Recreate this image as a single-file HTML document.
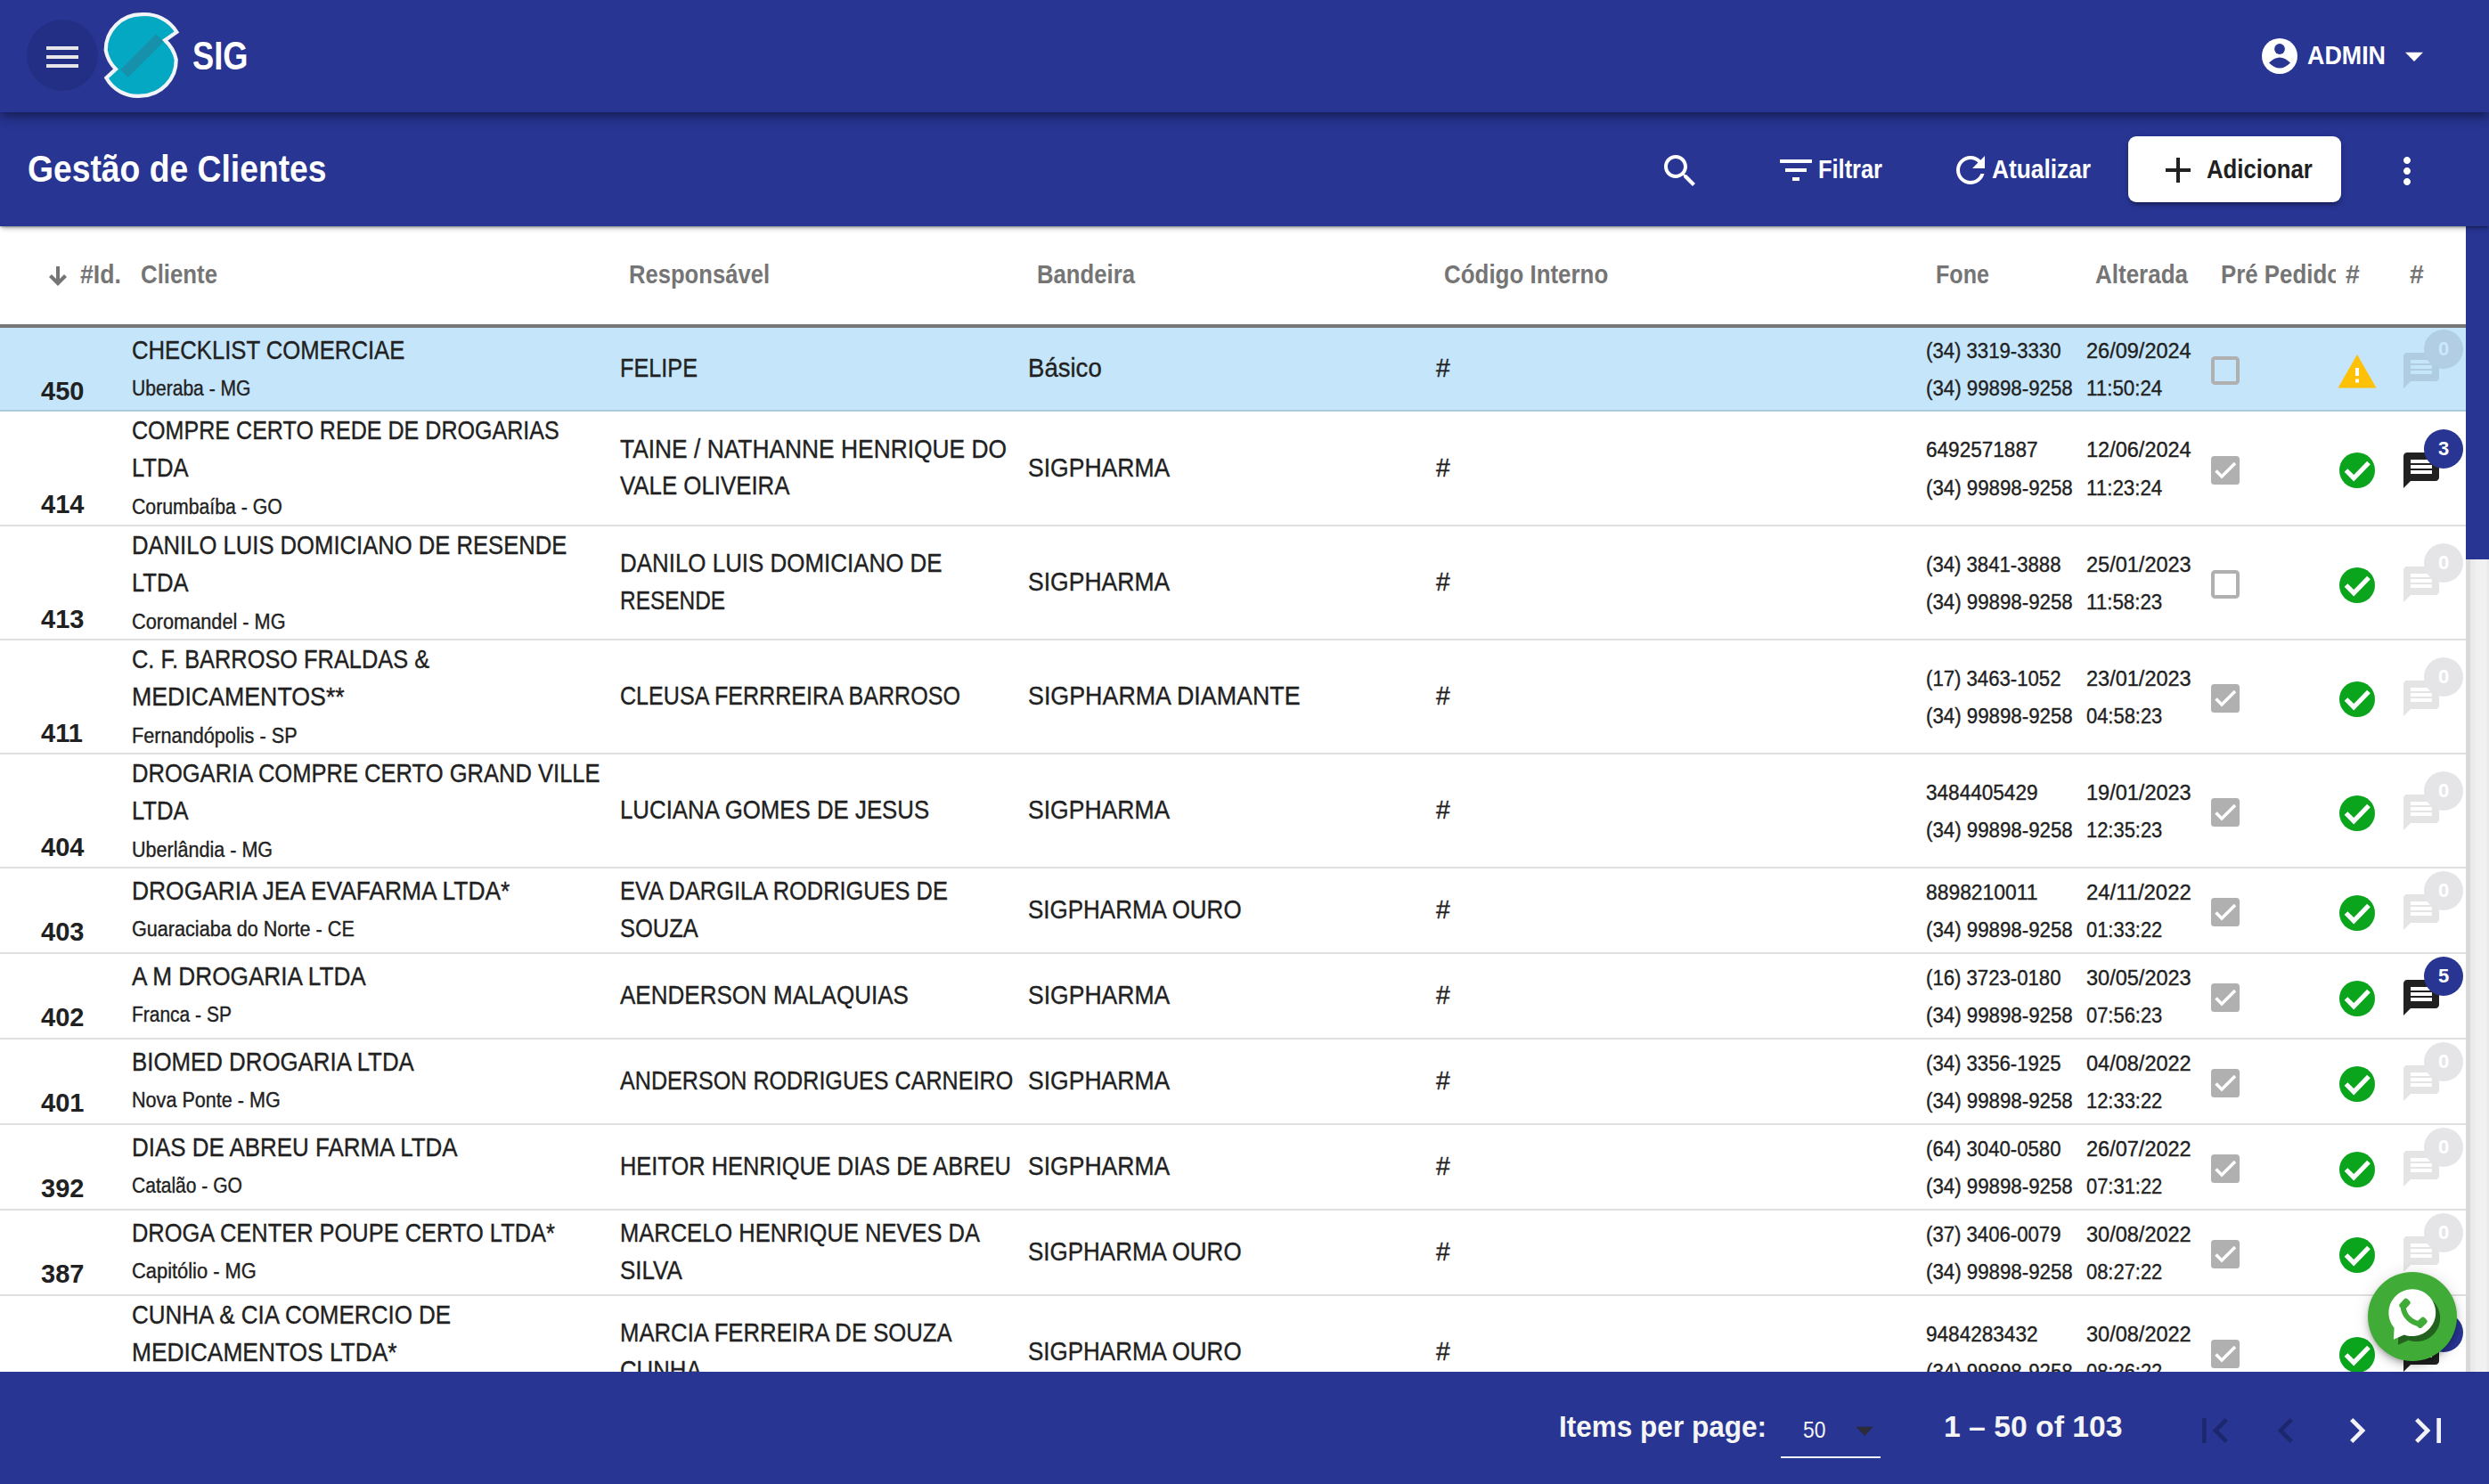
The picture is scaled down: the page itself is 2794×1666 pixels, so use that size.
<!DOCTYPE html>
<html><head><meta charset="utf-8"><title>Gestão de Clientes</title>
<style>
html,body{margin:0;padding:0;}
body{width:2794px;height:1666px;overflow:hidden;position:relative;background:#ffffff;font-family:"Liberation Sans", sans-serif;}
.t{position:absolute;white-space:pre;line-height:1;transform-origin:0 0;}
.row{position:absolute;left:0;width:2768px;}
.rowb{position:absolute;left:0;width:2768px;height:2px;background:rgba(0,0,0,0.12);}
.abs{position:absolute;}
svg{position:absolute;overflow:visible;}
</style></head><body>
<div class="row" style="top:368px;height:94px;background:#c5e5fb"></div>
<div class="rowb" style="top:460px;"></div>
<div class="row" style="top:462px;height:129px;background:#ffffff"></div>
<div class="rowb" style="top:589px;"></div>
<div class="row" style="top:591px;height:128px;background:#ffffff"></div>
<div class="rowb" style="top:717px;"></div>
<div class="row" style="top:719px;height:128px;background:#ffffff"></div>
<div class="rowb" style="top:845px;"></div>
<div class="row" style="top:847px;height:128px;background:#ffffff"></div>
<div class="rowb" style="top:973px;"></div>
<div class="row" style="top:975px;height:96px;background:#ffffff"></div>
<div class="rowb" style="top:1069px;"></div>
<div class="row" style="top:1071px;height:96px;background:#ffffff"></div>
<div class="rowb" style="top:1165px;"></div>
<div class="row" style="top:1167px;height:96px;background:#ffffff"></div>
<div class="rowb" style="top:1261px;"></div>
<div class="row" style="top:1263px;height:96px;background:#ffffff"></div>
<div class="rowb" style="top:1357px;"></div>
<div class="row" style="top:1359px;height:96px;background:#ffffff"></div>
<div class="rowb" style="top:1453px;"></div>
<div class="row" style="top:1455px;height:128px;background:#ffffff"></div>
<div class="rowb" style="top:1581px;"></div>

<div class="abs" style="left:0;top:254px;width:2768px;height:110px;background:#fff"></div>
<div class="abs" style="left:0;top:364px;width:2768px;height:4px;background:#777"></div>
<svg style="left:0;top:0" width="200" height="400"><path d="M65 299 V318" stroke="#757575" stroke-width="4"/><path d="M56.5 309.5 L65 318 L73.5 309.5" fill="none" stroke="#757575" stroke-width="4.2" stroke-linecap="butt" stroke-linejoin="miter"/></svg>
<div class="t" style="left:89.7px;top:293.9px;font-size:29px;font-weight:700;color:#757575;transform:scaleX(0.9186);">#Id.</div>
<div class="t" style="left:158.0px;top:293.9px;font-size:29px;font-weight:700;color:#757575;transform:scaleX(0.8895);">Cliente</div>
<div class="t" style="left:706.0px;top:293.9px;font-size:29px;font-weight:700;color:#757575;transform:scaleX(0.8831);">Responsável</div>
<div class="t" style="left:1163.6px;top:293.9px;font-size:29px;font-weight:700;color:#757575;transform:scaleX(0.8863);">Bandeira</div>
<div class="t" style="left:1620.7px;top:293.9px;font-size:29px;font-weight:700;color:#757575;transform:scaleX(0.8938);">Código Interno</div>
<div class="t" style="left:2172.8px;top:293.9px;font-size:29px;font-weight:700;color:#757575;transform:scaleX(0.8646);">Fone</div>
<div class="t" style="left:2352.0px;top:293.9px;font-size:29px;font-weight:700;color:#757575;transform:scaleX(0.8962);">Alterada</div>
<div class="t" style="left:2632.6px;top:293.9px;font-size:29px;font-weight:700;color:#757575;transform:scaleX(0.9789);">#</div>
<div class="t" style="left:2705.0px;top:293.9px;font-size:29px;font-weight:700;color:#757575;transform:scaleX(0.9789);">#</div>
<div class="t" style="left:147.5px;top:379.2px;font-size:29px;font-weight:400;color:#212121;transform:scaleX(0.8855);-webkit-text-stroke:0.35px currentColor;">CHECKLIST COMERCIAE</div>
<div class="t" style="left:147.5px;top:425.2px;font-size:23px;font-weight:400;color:#212121;transform:scaleX(0.9161);-webkit-text-stroke:0.35px currentColor;">Uberaba - MG</div>
<div class="t" style="left:46.0px;top:425.0px;font-size:29px;font-weight:700;color:#212121;">450</div>
<div class="t" style="left:695.5px;top:399.2px;font-size:29px;font-weight:400;color:#212121;transform:scaleX(0.8705);-webkit-text-stroke:0.35px currentColor;">FELIPE</div>
<div class="t" style="left:1153.5px;top:399.2px;font-size:29px;font-weight:400;color:#212121;transform:scaleX(0.9501);-webkit-text-stroke:0.35px currentColor;">Básico</div>
<div class="t" style="left:1611.8px;top:399.2px;font-size:29px;font-weight:400;color:#212121;transform:scaleX(0.9727);-webkit-text-stroke:0.35px currentColor;">#</div>
<div class="t" style="left:2162.0px;top:382.8px;font-size:23px;font-weight:400;color:#212121;transform:scaleX(0.9631);-webkit-text-stroke:0.35px currentColor;">(34) 3319-3330</div>
<div class="t" style="left:2162.0px;top:425.1px;font-size:23px;font-weight:400;color:#212121;transform:scaleX(0.9684);-webkit-text-stroke:0.35px currentColor;">(34) 99898-9258</div>
<div class="t" style="left:2342.0px;top:382.8px;font-size:23px;font-weight:400;color:#212121;transform:scaleX(1.0224);-webkit-text-stroke:0.35px currentColor;">26/09/2024</div>
<div class="t" style="left:2342.0px;top:425.1px;font-size:23px;font-weight:400;color:#212121;transform:scaleX(0.9712);-webkit-text-stroke:0.35px currentColor;">11:50:24</div>
<div class="t" style="left:147.5px;top:469.0px;font-size:29px;font-weight:400;color:#212121;transform:scaleX(0.8647);-webkit-text-stroke:0.35px currentColor;">COMPRE CERTO REDE DE DROGARIAS</div>
<div class="t" style="left:147.5px;top:510.9px;font-size:29px;font-weight:400;color:#212121;transform:scaleX(0.8835);-webkit-text-stroke:0.35px currentColor;">LTDA</div>
<div class="t" style="left:147.5px;top:557.5px;font-size:23px;font-weight:400;color:#212121;transform:scaleX(0.9234);-webkit-text-stroke:0.35px currentColor;">Corumbaíba - GO</div>
<div class="t" style="left:46.0px;top:552.1px;font-size:29px;font-weight:700;color:#212121;">414</div>
<div class="t" style="left:695.5px;top:489.6px;font-size:29px;font-weight:400;color:#212121;transform:scaleX(0.9090);-webkit-text-stroke:0.35px currentColor;">TAINE / NATHANNE HENRIQUE DO</div>
<div class="t" style="left:695.5px;top:531.2px;font-size:29px;font-weight:400;color:#212121;transform:scaleX(0.8908);-webkit-text-stroke:0.35px currentColor;">VALE OLIVEIRA</div>
<div class="t" style="left:1153.5px;top:510.8px;font-size:29px;font-weight:400;color:#212121;transform:scaleX(0.9154);-webkit-text-stroke:0.35px currentColor;">SIGPHARMA</div>
<div class="t" style="left:1611.8px;top:510.8px;font-size:29px;font-weight:400;color:#212121;transform:scaleX(0.9727);-webkit-text-stroke:0.35px currentColor;">#</div>
<div class="t" style="left:2162.0px;top:494.2px;font-size:23px;font-weight:400;color:#212121;transform:scaleX(0.9811);-webkit-text-stroke:0.35px currentColor;">6492571887</div>
<div class="t" style="left:2162.0px;top:536.6px;font-size:23px;font-weight:400;color:#212121;transform:scaleX(0.9684);-webkit-text-stroke:0.35px currentColor;">(34) 99898-9258</div>
<div class="t" style="left:2342.0px;top:494.2px;font-size:23px;font-weight:400;color:#212121;transform:scaleX(1.0224);-webkit-text-stroke:0.35px currentColor;">12/06/2024</div>
<div class="t" style="left:2342.0px;top:536.6px;font-size:23px;font-weight:400;color:#212121;transform:scaleX(0.9712);-webkit-text-stroke:0.35px currentColor;">11:23:24</div>
<div class="t" style="left:147.5px;top:598.0px;font-size:29px;font-weight:400;color:#212121;transform:scaleX(0.8836);-webkit-text-stroke:0.35px currentColor;">DANILO LUIS DOMICIANO DE RESENDE</div>
<div class="t" style="left:147.5px;top:639.9px;font-size:29px;font-weight:400;color:#212121;transform:scaleX(0.8835);-webkit-text-stroke:0.35px currentColor;">LTDA</div>
<div class="t" style="left:147.5px;top:686.5px;font-size:23px;font-weight:400;color:#212121;transform:scaleX(0.9443);-webkit-text-stroke:0.35px currentColor;">Coromandel - MG</div>
<div class="t" style="left:46.0px;top:681.1px;font-size:29px;font-weight:700;color:#212121;">413</div>
<div class="t" style="left:695.5px;top:618.1px;font-size:29px;font-weight:400;color:#212121;transform:scaleX(0.8940);-webkit-text-stroke:0.35px currentColor;">DANILO LUIS DOMICIANO DE</div>
<div class="t" style="left:695.5px;top:659.8px;font-size:29px;font-weight:400;color:#212121;transform:scaleX(0.8423);-webkit-text-stroke:0.35px currentColor;">RESENDE</div>
<div class="t" style="left:1153.5px;top:639.2px;font-size:29px;font-weight:400;color:#212121;transform:scaleX(0.9154);-webkit-text-stroke:0.35px currentColor;">SIGPHARMA</div>
<div class="t" style="left:1611.8px;top:639.2px;font-size:29px;font-weight:400;color:#212121;transform:scaleX(0.9727);-webkit-text-stroke:0.35px currentColor;">#</div>
<div class="t" style="left:2162.0px;top:622.8px;font-size:23px;font-weight:400;color:#212121;transform:scaleX(0.9631);-webkit-text-stroke:0.35px currentColor;">(34) 3841-3888</div>
<div class="t" style="left:2162.0px;top:665.1px;font-size:23px;font-weight:400;color:#212121;transform:scaleX(0.9684);-webkit-text-stroke:0.35px currentColor;">(34) 99898-9258</div>
<div class="t" style="left:2342.0px;top:622.8px;font-size:23px;font-weight:400;color:#212121;transform:scaleX(1.0224);-webkit-text-stroke:0.35px currentColor;">25/01/2023</div>
<div class="t" style="left:2342.0px;top:665.1px;font-size:23px;font-weight:400;color:#212121;transform:scaleX(0.9712);-webkit-text-stroke:0.35px currentColor;">11:58:23</div>
<div class="t" style="left:147.5px;top:726.0px;font-size:29px;font-weight:400;color:#212121;transform:scaleX(0.8748);-webkit-text-stroke:0.35px currentColor;">C. F. BARROSO FRALDAS &</div>
<div class="t" style="left:147.5px;top:767.9px;font-size:29px;font-weight:400;color:#212121;transform:scaleX(0.9220);-webkit-text-stroke:0.35px currentColor;">MEDICAMENTOS**</div>
<div class="t" style="left:147.5px;top:814.5px;font-size:23px;font-weight:400;color:#212121;transform:scaleX(0.9427);-webkit-text-stroke:0.35px currentColor;">Fernandópolis - SP</div>
<div class="t" style="left:46.0px;top:809.1px;font-size:29px;font-weight:700;color:#212121;">411</div>
<div class="t" style="left:695.5px;top:767.1px;font-size:29px;font-weight:400;color:#212121;transform:scaleX(0.8649);-webkit-text-stroke:0.35px currentColor;">CLEUSA FERRREIRA BARROSO</div>
<div class="t" style="left:1153.5px;top:767.2px;font-size:29px;font-weight:400;color:#212121;transform:scaleX(0.9251);-webkit-text-stroke:0.35px currentColor;">SIGPHARMA DIAMANTE</div>
<div class="t" style="left:1611.8px;top:767.2px;font-size:29px;font-weight:400;color:#212121;transform:scaleX(0.9727);-webkit-text-stroke:0.35px currentColor;">#</div>
<div class="t" style="left:2162.0px;top:750.8px;font-size:23px;font-weight:400;color:#212121;transform:scaleX(0.9631);-webkit-text-stroke:0.35px currentColor;">(17) 3463-1052</div>
<div class="t" style="left:2162.0px;top:793.1px;font-size:23px;font-weight:400;color:#212121;transform:scaleX(0.9684);-webkit-text-stroke:0.35px currentColor;">(34) 99898-9258</div>
<div class="t" style="left:2342.0px;top:750.8px;font-size:23px;font-weight:400;color:#212121;transform:scaleX(1.0224);-webkit-text-stroke:0.35px currentColor;">23/01/2023</div>
<div class="t" style="left:2342.0px;top:793.1px;font-size:23px;font-weight:400;color:#212121;transform:scaleX(0.9527);-webkit-text-stroke:0.35px currentColor;">04:58:23</div>
<div class="t" style="left:147.5px;top:854.0px;font-size:29px;font-weight:400;color:#212121;transform:scaleX(0.8807);-webkit-text-stroke:0.35px currentColor;">DROGARIA COMPRE CERTO GRAND VILLE</div>
<div class="t" style="left:147.5px;top:895.9px;font-size:29px;font-weight:400;color:#212121;transform:scaleX(0.8835);-webkit-text-stroke:0.35px currentColor;">LTDA</div>
<div class="t" style="left:147.5px;top:942.5px;font-size:23px;font-weight:400;color:#212121;transform:scaleX(0.9370);-webkit-text-stroke:0.35px currentColor;">Uberlândia - MG</div>
<div class="t" style="left:46.0px;top:937.1px;font-size:29px;font-weight:700;color:#212121;">404</div>
<div class="t" style="left:695.5px;top:895.1px;font-size:29px;font-weight:400;color:#212121;transform:scaleX(0.8903);-webkit-text-stroke:0.35px currentColor;">LUCIANA GOMES DE JESUS</div>
<div class="t" style="left:1153.5px;top:895.2px;font-size:29px;font-weight:400;color:#212121;transform:scaleX(0.9154);-webkit-text-stroke:0.35px currentColor;">SIGPHARMA</div>
<div class="t" style="left:1611.8px;top:895.2px;font-size:29px;font-weight:400;color:#212121;transform:scaleX(0.9727);-webkit-text-stroke:0.35px currentColor;">#</div>
<div class="t" style="left:2162.0px;top:878.8px;font-size:23px;font-weight:400;color:#212121;transform:scaleX(0.9811);-webkit-text-stroke:0.35px currentColor;">3484405429</div>
<div class="t" style="left:2162.0px;top:921.1px;font-size:23px;font-weight:400;color:#212121;transform:scaleX(0.9684);-webkit-text-stroke:0.35px currentColor;">(34) 99898-9258</div>
<div class="t" style="left:2342.0px;top:878.8px;font-size:23px;font-weight:400;color:#212121;transform:scaleX(1.0224);-webkit-text-stroke:0.35px currentColor;">19/01/2023</div>
<div class="t" style="left:2342.0px;top:921.1px;font-size:23px;font-weight:400;color:#212121;transform:scaleX(0.9527);-webkit-text-stroke:0.35px currentColor;">12:35:23</div>
<div class="t" style="left:147.5px;top:986.1px;font-size:29px;font-weight:400;color:#212121;transform:scaleX(0.9100);-webkit-text-stroke:0.35px currentColor;">DROGARIA JEA EVAFARMA LTDA*</div>
<div class="t" style="left:147.5px;top:1032.2px;font-size:23px;font-weight:400;color:#212121;transform:scaleX(0.9394);-webkit-text-stroke:0.35px currentColor;">Guaraciaba do Norte - CE</div>
<div class="t" style="left:46.0px;top:1031.9px;font-size:29px;font-weight:700;color:#212121;">403</div>
<div class="t" style="left:695.5px;top:986.1px;font-size:29px;font-weight:400;color:#212121;transform:scaleX(0.8758);-webkit-text-stroke:0.35px currentColor;">EVA DARGILA RODRIGUES DE</div>
<div class="t" style="left:695.5px;top:1027.8px;font-size:29px;font-weight:400;color:#212121;transform:scaleX(0.8788);-webkit-text-stroke:0.35px currentColor;">SOUZA</div>
<div class="t" style="left:1153.5px;top:1007.3px;font-size:29px;font-weight:400;color:#212121;transform:scaleX(0.8957);-webkit-text-stroke:0.35px currentColor;">SIGPHARMA OURO</div>
<div class="t" style="left:1611.8px;top:1007.3px;font-size:29px;font-weight:400;color:#212121;transform:scaleX(0.9727);-webkit-text-stroke:0.35px currentColor;">#</div>
<div class="t" style="left:2162.0px;top:990.8px;font-size:23px;font-weight:400;color:#212121;transform:scaleX(0.9943);-webkit-text-stroke:0.35px currentColor;">8898210011</div>
<div class="t" style="left:2162.0px;top:1033.0px;font-size:23px;font-weight:400;color:#212121;transform:scaleX(0.9684);-webkit-text-stroke:0.35px currentColor;">(34) 99898-9258</div>
<div class="t" style="left:2342.0px;top:990.8px;font-size:23px;font-weight:400;color:#212121;transform:scaleX(1.0379);-webkit-text-stroke:0.35px currentColor;">24/11/2022</div>
<div class="t" style="left:2342.0px;top:1033.0px;font-size:23px;font-weight:400;color:#212121;transform:scaleX(0.9527);-webkit-text-stroke:0.35px currentColor;">01:33:22</div>
<div class="t" style="left:147.5px;top:1082.1px;font-size:29px;font-weight:400;color:#212121;transform:scaleX(0.9027);-webkit-text-stroke:0.35px currentColor;">A M DROGARIA LTDA</div>
<div class="t" style="left:147.5px;top:1128.2px;font-size:23px;font-weight:400;color:#212121;transform:scaleX(0.9118);-webkit-text-stroke:0.35px currentColor;">Franca - SP</div>
<div class="t" style="left:46.0px;top:1127.9px;font-size:29px;font-weight:700;color:#212121;">402</div>
<div class="t" style="left:695.5px;top:1103.1px;font-size:29px;font-weight:400;color:#212121;transform:scaleX(0.8975);-webkit-text-stroke:0.35px currentColor;">AENDERSON MALAQUIAS</div>
<div class="t" style="left:1153.5px;top:1103.2px;font-size:29px;font-weight:400;color:#212121;transform:scaleX(0.9154);-webkit-text-stroke:0.35px currentColor;">SIGPHARMA</div>
<div class="t" style="left:1611.8px;top:1103.2px;font-size:29px;font-weight:400;color:#212121;transform:scaleX(0.9727);-webkit-text-stroke:0.35px currentColor;">#</div>
<div class="t" style="left:2162.0px;top:1086.8px;font-size:23px;font-weight:400;color:#212121;transform:scaleX(0.9631);-webkit-text-stroke:0.35px currentColor;">(16) 3723-0180</div>
<div class="t" style="left:2162.0px;top:1129.0px;font-size:23px;font-weight:400;color:#212121;transform:scaleX(0.9684);-webkit-text-stroke:0.35px currentColor;">(34) 99898-9258</div>
<div class="t" style="left:2342.0px;top:1086.8px;font-size:23px;font-weight:400;color:#212121;transform:scaleX(1.0224);-webkit-text-stroke:0.35px currentColor;">30/05/2023</div>
<div class="t" style="left:2342.0px;top:1129.0px;font-size:23px;font-weight:400;color:#212121;transform:scaleX(0.9527);-webkit-text-stroke:0.35px currentColor;">07:56:23</div>
<div class="t" style="left:147.5px;top:1178.1px;font-size:29px;font-weight:400;color:#212121;transform:scaleX(0.8909);-webkit-text-stroke:0.35px currentColor;">BIOMED DROGARIA LTDA</div>
<div class="t" style="left:147.5px;top:1224.2px;font-size:23px;font-weight:400;color:#212121;transform:scaleX(0.9387);-webkit-text-stroke:0.35px currentColor;">Nova Ponte - MG</div>
<div class="t" style="left:46.0px;top:1223.9px;font-size:29px;font-weight:700;color:#212121;">401</div>
<div class="t" style="left:695.5px;top:1199.1px;font-size:29px;font-weight:400;color:#212121;transform:scaleX(0.8665);-webkit-text-stroke:0.35px currentColor;">ANDERSON RODRIGUES CARNEIRO</div>
<div class="t" style="left:1153.5px;top:1199.2px;font-size:29px;font-weight:400;color:#212121;transform:scaleX(0.9154);-webkit-text-stroke:0.35px currentColor;">SIGPHARMA</div>
<div class="t" style="left:1611.8px;top:1199.2px;font-size:29px;font-weight:400;color:#212121;transform:scaleX(0.9727);-webkit-text-stroke:0.35px currentColor;">#</div>
<div class="t" style="left:2162.0px;top:1182.8px;font-size:23px;font-weight:400;color:#212121;transform:scaleX(0.9631);-webkit-text-stroke:0.35px currentColor;">(34) 3356-1925</div>
<div class="t" style="left:2162.0px;top:1225.0px;font-size:23px;font-weight:400;color:#212121;transform:scaleX(0.9684);-webkit-text-stroke:0.35px currentColor;">(34) 99898-9258</div>
<div class="t" style="left:2342.0px;top:1182.8px;font-size:23px;font-weight:400;color:#212121;transform:scaleX(1.0224);-webkit-text-stroke:0.35px currentColor;">04/08/2022</div>
<div class="t" style="left:2342.0px;top:1225.0px;font-size:23px;font-weight:400;color:#212121;transform:scaleX(0.9527);-webkit-text-stroke:0.35px currentColor;">12:33:22</div>
<div class="t" style="left:147.5px;top:1274.1px;font-size:29px;font-weight:400;color:#212121;transform:scaleX(0.8941);-webkit-text-stroke:0.35px currentColor;">DIAS DE ABREU FARMA LTDA</div>
<div class="t" style="left:147.5px;top:1320.2px;font-size:23px;font-weight:400;color:#212121;transform:scaleX(0.9144);-webkit-text-stroke:0.35px currentColor;">Catalão - GO</div>
<div class="t" style="left:46.0px;top:1319.9px;font-size:29px;font-weight:700;color:#212121;">392</div>
<div class="t" style="left:695.5px;top:1295.1px;font-size:29px;font-weight:400;color:#212121;transform:scaleX(0.8765);-webkit-text-stroke:0.35px currentColor;">HEITOR HENRIQUE DIAS DE ABREU</div>
<div class="t" style="left:1153.5px;top:1295.2px;font-size:29px;font-weight:400;color:#212121;transform:scaleX(0.9154);-webkit-text-stroke:0.35px currentColor;">SIGPHARMA</div>
<div class="t" style="left:1611.8px;top:1295.2px;font-size:29px;font-weight:400;color:#212121;transform:scaleX(0.9727);-webkit-text-stroke:0.35px currentColor;">#</div>
<div class="t" style="left:2162.0px;top:1278.8px;font-size:23px;font-weight:400;color:#212121;transform:scaleX(0.9631);-webkit-text-stroke:0.35px currentColor;">(64) 3040-0580</div>
<div class="t" style="left:2162.0px;top:1321.0px;font-size:23px;font-weight:400;color:#212121;transform:scaleX(0.9684);-webkit-text-stroke:0.35px currentColor;">(34) 99898-9258</div>
<div class="t" style="left:2342.0px;top:1278.8px;font-size:23px;font-weight:400;color:#212121;transform:scaleX(1.0224);-webkit-text-stroke:0.35px currentColor;">26/07/2022</div>
<div class="t" style="left:2342.0px;top:1321.0px;font-size:23px;font-weight:400;color:#212121;transform:scaleX(0.9527);-webkit-text-stroke:0.35px currentColor;">07:31:22</div>
<div class="t" style="left:147.5px;top:1370.1px;font-size:29px;font-weight:400;color:#212121;transform:scaleX(0.8771);-webkit-text-stroke:0.35px currentColor;">DROGA CENTER POUPE CERTO LTDA*</div>
<div class="t" style="left:147.5px;top:1416.2px;font-size:23px;font-weight:400;color:#212121;transform:scaleX(0.9511);-webkit-text-stroke:0.35px currentColor;">Capitólio - MG</div>
<div class="t" style="left:46.0px;top:1415.9px;font-size:29px;font-weight:700;color:#212121;">387</div>
<div class="t" style="left:695.5px;top:1370.1px;font-size:29px;font-weight:400;color:#212121;transform:scaleX(0.8797);-webkit-text-stroke:0.35px currentColor;">MARCELO HENRIQUE NEVES DA</div>
<div class="t" style="left:695.5px;top:1411.8px;font-size:29px;font-weight:400;color:#212121;transform:scaleX(0.8971);-webkit-text-stroke:0.35px currentColor;">SILVA</div>
<div class="t" style="left:1153.5px;top:1391.2px;font-size:29px;font-weight:400;color:#212121;transform:scaleX(0.8957);-webkit-text-stroke:0.35px currentColor;">SIGPHARMA OURO</div>
<div class="t" style="left:1611.8px;top:1391.2px;font-size:29px;font-weight:400;color:#212121;transform:scaleX(0.9727);-webkit-text-stroke:0.35px currentColor;">#</div>
<div class="t" style="left:2162.0px;top:1374.8px;font-size:23px;font-weight:400;color:#212121;transform:scaleX(0.9631);-webkit-text-stroke:0.35px currentColor;">(37) 3406-0079</div>
<div class="t" style="left:2162.0px;top:1417.0px;font-size:23px;font-weight:400;color:#212121;transform:scaleX(0.9684);-webkit-text-stroke:0.35px currentColor;">(34) 99898-9258</div>
<div class="t" style="left:2342.0px;top:1374.8px;font-size:23px;font-weight:400;color:#212121;transform:scaleX(1.0224);-webkit-text-stroke:0.35px currentColor;">30/08/2022</div>
<div class="t" style="left:2342.0px;top:1417.0px;font-size:23px;font-weight:400;color:#212121;transform:scaleX(0.9527);-webkit-text-stroke:0.35px currentColor;">08:27:22</div>
<div class="t" style="left:147.5px;top:1461.9px;font-size:29px;font-weight:400;color:#212121;transform:scaleX(0.8963);-webkit-text-stroke:0.35px currentColor;">CUNHA & CIA COMERCIO DE</div>
<div class="t" style="left:147.5px;top:1503.8px;font-size:29px;font-weight:400;color:#212121;transform:scaleX(0.9080);-webkit-text-stroke:0.35px currentColor;">MEDICAMENTOS LTDA*</div>
<div class="t" style="left:147.5px;top:1550.5px;font-size:23px;font-weight:400;color:#212121;transform:scaleX(0.9355);-webkit-text-stroke:0.35px currentColor;">Araxá - MG</div>
<div class="t" style="left:46.0px;top:1545.1px;font-size:29px;font-weight:700;color:#212121;">386</div>
<div class="t" style="left:695.5px;top:1482.1px;font-size:29px;font-weight:400;color:#212121;transform:scaleX(0.8862);-webkit-text-stroke:0.35px currentColor;">MARCIA FERREIRA DE SOUZA</div>
<div class="t" style="left:695.5px;top:1523.8px;font-size:29px;font-weight:400;color:#212121;transform:scaleX(0.8882);-webkit-text-stroke:0.35px currentColor;">CUNHA</div>
<div class="t" style="left:1153.5px;top:1503.2px;font-size:29px;font-weight:400;color:#212121;transform:scaleX(0.8957);-webkit-text-stroke:0.35px currentColor;">SIGPHARMA OURO</div>
<div class="t" style="left:1611.8px;top:1503.2px;font-size:29px;font-weight:400;color:#212121;transform:scaleX(0.9727);-webkit-text-stroke:0.35px currentColor;">#</div>
<div class="t" style="left:2162.0px;top:1486.8px;font-size:23px;font-weight:400;color:#212121;transform:scaleX(0.9811);-webkit-text-stroke:0.35px currentColor;">9484283432</div>
<div class="t" style="left:2162.0px;top:1529.0px;font-size:23px;font-weight:400;color:#212121;transform:scaleX(0.9684);-webkit-text-stroke:0.35px currentColor;">(34) 99898-9258</div>
<div class="t" style="left:2342.0px;top:1486.8px;font-size:23px;font-weight:400;color:#212121;transform:scaleX(1.0224);-webkit-text-stroke:0.35px currentColor;">30/08/2022</div>
<div class="t" style="left:2342.0px;top:1529.0px;font-size:23px;font-weight:400;color:#212121;transform:scaleX(0.9527);-webkit-text-stroke:0.35px currentColor;">08:26:22</div>
<div class="abs" style="left:2480px;top:270px;width:142px;height:70px;overflow:hidden"><div class="t" style="left:12.5px;top:23.9px;font-size:29px;font-weight:700;color:#757575;transform:scaleX(0.8911);">Pré Pedido</div></div>
<svg style="left:2482px;top:400px" width="32" height="32" viewBox="0 0 32 32"><rect x="2" y="2" width="28" height="28" rx="2.5" fill="none" stroke="#b0b0b0" stroke-width="4"/></svg>
<svg style="left:2621.5px;top:392.5px" width="48" height="48" viewBox="0 0 48 48"><path d="M2.5 42.5 L24 5 L45.5 42.5 Z" fill="#ffc107"/><rect x="22" y="20" width="4" height="9" fill="#fff"/><rect x="22" y="32.5" width="4" height="4" fill="#fff"/></svg>
<div class="abs" style="left:2694px;top:370px;width:80px;height:80px;opacity:0.11"><svg style="left:0;top:22px" width="48" height="48" viewBox="0 0 24 24"><path fill="#111" d="M20 2H4c-1.1 0-1.99.9-1.99 2L2 22l4-4h14c1.1 0 2-.9 2-2V4c0-1.1-.9-2-2-2zM18 14H6v-2h12v2zm0-3H6V9h12v2zm0-3H6V6h12v2z"/></svg><div class="abs" style="left:27px;top:0;width:44px;height:44px;border-radius:50%;background:#1c1c38;color:#fff;font:700 22px/44px 'Liberation Sans',sans-serif;text-align:center"><span style="color:#fff">0</span></div></div>
<svg style="left:2482px;top:512px" width="32" height="32" viewBox="0 0 32 32"><rect x="0" y="0" width="32" height="32" rx="3.5" fill="#b0b0b0"/><path d="M5.5 16.5 L12 23 L27 8" fill="none" stroke="#fff" stroke-width="3.5"/></svg>
<svg style="left:2625.5px;top:508.0px" width="40" height="40" viewBox="0 0 40 40"><circle cx="20" cy="20" r="20" fill="#0aa51c"/><path d="M7.5 20 L16.2 28.7 L33 11.5" fill="none" stroke="#fff" stroke-width="5.2"/></svg>
<svg style="left:2694px;top:504px" width="48" height="48" viewBox="0 0 24 24"><path fill="#212121" d="M20 2H4c-1.1 0-1.99.9-1.99 2L2 22l4-4h14c1.1 0 2-.9 2-2V4c0-1.1-.9-2-2-2zM18 14H6v-2h12v2zm0-3H6V9h12v2zm0-3H6V6h12v2z"/></svg><div class="abs" style="left:2721px;top:482px;width:44px;height:44px;border-radius:50%;background:#283593;color:#fff;font:700 22px/44px 'Liberation Sans',sans-serif;text-align:center">3</div>
<svg style="left:2482px;top:640px" width="32" height="32" viewBox="0 0 32 32"><rect x="2" y="2" width="28" height="28" rx="2.5" fill="none" stroke="#b0b0b0" stroke-width="4"/></svg>
<svg style="left:2625.5px;top:636.5px" width="40" height="40" viewBox="0 0 40 40"><circle cx="20" cy="20" r="20" fill="#0aa51c"/><path d="M7.5 20 L16.2 28.7 L33 11.5" fill="none" stroke="#fff" stroke-width="5.2"/></svg>
<div class="abs" style="left:2694px;top:610px;width:80px;height:80px;opacity:0.11"><svg style="left:0;top:22px" width="48" height="48" viewBox="0 0 24 24"><path fill="#111" d="M20 2H4c-1.1 0-1.99.9-1.99 2L2 22l4-4h14c1.1 0 2-.9 2-2V4c0-1.1-.9-2-2-2zM18 14H6v-2h12v2zm0-3H6V9h12v2zm0-3H6V6h12v2z"/></svg><div class="abs" style="left:27px;top:0;width:44px;height:44px;border-radius:50%;background:#1c1c38;color:#fff;font:700 22px/44px 'Liberation Sans',sans-serif;text-align:center"><span style="color:#fff">0</span></div></div>
<svg style="left:2482px;top:768px" width="32" height="32" viewBox="0 0 32 32"><rect x="0" y="0" width="32" height="32" rx="3.5" fill="#b0b0b0"/><path d="M5.5 16.5 L12 23 L27 8" fill="none" stroke="#fff" stroke-width="3.5"/></svg>
<svg style="left:2625.5px;top:764.5px" width="40" height="40" viewBox="0 0 40 40"><circle cx="20" cy="20" r="20" fill="#0aa51c"/><path d="M7.5 20 L16.2 28.7 L33 11.5" fill="none" stroke="#fff" stroke-width="5.2"/></svg>
<div class="abs" style="left:2694px;top:738px;width:80px;height:80px;opacity:0.11"><svg style="left:0;top:22px" width="48" height="48" viewBox="0 0 24 24"><path fill="#111" d="M20 2H4c-1.1 0-1.99.9-1.99 2L2 22l4-4h14c1.1 0 2-.9 2-2V4c0-1.1-.9-2-2-2zM18 14H6v-2h12v2zm0-3H6V9h12v2zm0-3H6V6h12v2z"/></svg><div class="abs" style="left:27px;top:0;width:44px;height:44px;border-radius:50%;background:#1c1c38;color:#fff;font:700 22px/44px 'Liberation Sans',sans-serif;text-align:center"><span style="color:#fff">0</span></div></div>
<svg style="left:2482px;top:896px" width="32" height="32" viewBox="0 0 32 32"><rect x="0" y="0" width="32" height="32" rx="3.5" fill="#b0b0b0"/><path d="M5.5 16.5 L12 23 L27 8" fill="none" stroke="#fff" stroke-width="3.5"/></svg>
<svg style="left:2625.5px;top:892.5px" width="40" height="40" viewBox="0 0 40 40"><circle cx="20" cy="20" r="20" fill="#0aa51c"/><path d="M7.5 20 L16.2 28.7 L33 11.5" fill="none" stroke="#fff" stroke-width="5.2"/></svg>
<div class="abs" style="left:2694px;top:866px;width:80px;height:80px;opacity:0.11"><svg style="left:0;top:22px" width="48" height="48" viewBox="0 0 24 24"><path fill="#111" d="M20 2H4c-1.1 0-1.99.9-1.99 2L2 22l4-4h14c1.1 0 2-.9 2-2V4c0-1.1-.9-2-2-2zM18 14H6v-2h12v2zm0-3H6V9h12v2zm0-3H6V6h12v2z"/></svg><div class="abs" style="left:27px;top:0;width:44px;height:44px;border-radius:50%;background:#1c1c38;color:#fff;font:700 22px/44px 'Liberation Sans',sans-serif;text-align:center"><span style="color:#fff">0</span></div></div>
<svg style="left:2482px;top:1008px" width="32" height="32" viewBox="0 0 32 32"><rect x="0" y="0" width="32" height="32" rx="3.5" fill="#b0b0b0"/><path d="M5.5 16.5 L12 23 L27 8" fill="none" stroke="#fff" stroke-width="3.5"/></svg>
<svg style="left:2625.5px;top:1004.5px" width="40" height="40" viewBox="0 0 40 40"><circle cx="20" cy="20" r="20" fill="#0aa51c"/><path d="M7.5 20 L16.2 28.7 L33 11.5" fill="none" stroke="#fff" stroke-width="5.2"/></svg>
<div class="abs" style="left:2694px;top:978px;width:80px;height:80px;opacity:0.11"><svg style="left:0;top:22px" width="48" height="48" viewBox="0 0 24 24"><path fill="#111" d="M20 2H4c-1.1 0-1.99.9-1.99 2L2 22l4-4h14c1.1 0 2-.9 2-2V4c0-1.1-.9-2-2-2zM18 14H6v-2h12v2zm0-3H6V9h12v2zm0-3H6V6h12v2z"/></svg><div class="abs" style="left:27px;top:0;width:44px;height:44px;border-radius:50%;background:#1c1c38;color:#fff;font:700 22px/44px 'Liberation Sans',sans-serif;text-align:center"><span style="color:#fff">0</span></div></div>
<svg style="left:2482px;top:1104px" width="32" height="32" viewBox="0 0 32 32"><rect x="0" y="0" width="32" height="32" rx="3.5" fill="#b0b0b0"/><path d="M5.5 16.5 L12 23 L27 8" fill="none" stroke="#fff" stroke-width="3.5"/></svg>
<svg style="left:2625.5px;top:1100.5px" width="40" height="40" viewBox="0 0 40 40"><circle cx="20" cy="20" r="20" fill="#0aa51c"/><path d="M7.5 20 L16.2 28.7 L33 11.5" fill="none" stroke="#fff" stroke-width="5.2"/></svg>
<svg style="left:2694px;top:1096px" width="48" height="48" viewBox="0 0 24 24"><path fill="#212121" d="M20 2H4c-1.1 0-1.99.9-1.99 2L2 22l4-4h14c1.1 0 2-.9 2-2V4c0-1.1-.9-2-2-2zM18 14H6v-2h12v2zm0-3H6V9h12v2zm0-3H6V6h12v2z"/></svg><div class="abs" style="left:2721px;top:1074px;width:44px;height:44px;border-radius:50%;background:#283593;color:#fff;font:700 22px/44px 'Liberation Sans',sans-serif;text-align:center">5</div>
<svg style="left:2482px;top:1200px" width="32" height="32" viewBox="0 0 32 32"><rect x="0" y="0" width="32" height="32" rx="3.5" fill="#b0b0b0"/><path d="M5.5 16.5 L12 23 L27 8" fill="none" stroke="#fff" stroke-width="3.5"/></svg>
<svg style="left:2625.5px;top:1196.5px" width="40" height="40" viewBox="0 0 40 40"><circle cx="20" cy="20" r="20" fill="#0aa51c"/><path d="M7.5 20 L16.2 28.7 L33 11.5" fill="none" stroke="#fff" stroke-width="5.2"/></svg>
<div class="abs" style="left:2694px;top:1170px;width:80px;height:80px;opacity:0.11"><svg style="left:0;top:22px" width="48" height="48" viewBox="0 0 24 24"><path fill="#111" d="M20 2H4c-1.1 0-1.99.9-1.99 2L2 22l4-4h14c1.1 0 2-.9 2-2V4c0-1.1-.9-2-2-2zM18 14H6v-2h12v2zm0-3H6V9h12v2zm0-3H6V6h12v2z"/></svg><div class="abs" style="left:27px;top:0;width:44px;height:44px;border-radius:50%;background:#1c1c38;color:#fff;font:700 22px/44px 'Liberation Sans',sans-serif;text-align:center"><span style="color:#fff">0</span></div></div>
<svg style="left:2482px;top:1296px" width="32" height="32" viewBox="0 0 32 32"><rect x="0" y="0" width="32" height="32" rx="3.5" fill="#b0b0b0"/><path d="M5.5 16.5 L12 23 L27 8" fill="none" stroke="#fff" stroke-width="3.5"/></svg>
<svg style="left:2625.5px;top:1292.5px" width="40" height="40" viewBox="0 0 40 40"><circle cx="20" cy="20" r="20" fill="#0aa51c"/><path d="M7.5 20 L16.2 28.7 L33 11.5" fill="none" stroke="#fff" stroke-width="5.2"/></svg>
<div class="abs" style="left:2694px;top:1266px;width:80px;height:80px;opacity:0.11"><svg style="left:0;top:22px" width="48" height="48" viewBox="0 0 24 24"><path fill="#111" d="M20 2H4c-1.1 0-1.99.9-1.99 2L2 22l4-4h14c1.1 0 2-.9 2-2V4c0-1.1-.9-2-2-2zM18 14H6v-2h12v2zm0-3H6V9h12v2zm0-3H6V6h12v2z"/></svg><div class="abs" style="left:27px;top:0;width:44px;height:44px;border-radius:50%;background:#1c1c38;color:#fff;font:700 22px/44px 'Liberation Sans',sans-serif;text-align:center"><span style="color:#fff">0</span></div></div>
<svg style="left:2482px;top:1392px" width="32" height="32" viewBox="0 0 32 32"><rect x="0" y="0" width="32" height="32" rx="3.5" fill="#b0b0b0"/><path d="M5.5 16.5 L12 23 L27 8" fill="none" stroke="#fff" stroke-width="3.5"/></svg>
<svg style="left:2625.5px;top:1388.5px" width="40" height="40" viewBox="0 0 40 40"><circle cx="20" cy="20" r="20" fill="#0aa51c"/><path d="M7.5 20 L16.2 28.7 L33 11.5" fill="none" stroke="#fff" stroke-width="5.2"/></svg>
<div class="abs" style="left:2694px;top:1362px;width:80px;height:80px;opacity:0.11"><svg style="left:0;top:22px" width="48" height="48" viewBox="0 0 24 24"><path fill="#111" d="M20 2H4c-1.1 0-1.99.9-1.99 2L2 22l4-4h14c1.1 0 2-.9 2-2V4c0-1.1-.9-2-2-2zM18 14H6v-2h12v2zm0-3H6V9h12v2zm0-3H6V6h12v2z"/></svg><div class="abs" style="left:27px;top:0;width:44px;height:44px;border-radius:50%;background:#1c1c38;color:#fff;font:700 22px/44px 'Liberation Sans',sans-serif;text-align:center"><span style="color:#fff">0</span></div></div>
<svg style="left:2482px;top:1504px" width="32" height="32" viewBox="0 0 32 32"><rect x="0" y="0" width="32" height="32" rx="3.5" fill="#b0b0b0"/><path d="M5.5 16.5 L12 23 L27 8" fill="none" stroke="#fff" stroke-width="3.5"/></svg>
<svg style="left:2625.5px;top:1500.5px" width="40" height="40" viewBox="0 0 40 40"><circle cx="20" cy="20" r="20" fill="#0aa51c"/><path d="M7.5 20 L16.2 28.7 L33 11.5" fill="none" stroke="#fff" stroke-width="5.2"/></svg>
<svg style="left:2694px;top:1496px" width="48" height="48" viewBox="0 0 24 24"><path fill="#212121" d="M20 2H4c-1.1 0-1.99.9-1.99 2L2 22l4-4h14c1.1 0 2-.9 2-2V4c0-1.1-.9-2-2-2zM18 14H6v-2h12v2zm0-3H6V9h12v2zm0-3H6V6h12v2z"/></svg><div class="abs" style="left:2721px;top:1474px;width:44px;height:44px;border-radius:50%;background:#283593;color:#fff;font:700 22px/44px 'Liberation Sans',sans-serif;text-align:center">2</div>
<div class="abs" style="left:0;top:126px;width:2794px;height:128px;background:#283593;box-shadow:0 2px 2px -1px rgba(0,0,0,0.3),0 4px 6px -2px rgba(0,0,0,0.2),0 2px 6px 0 rgba(0,0,0,0.12);z-index:5"></div>
<div class="abs" style="left:0;top:0;width:2794px;height:126px;background:#283593;box-shadow:0 4px 8px -2px rgba(0,0,0,0.25),0 8px 10px 0 rgba(0,0,0,0.16),0 2px 20px 0 rgba(0,0,0,0.12);z-index:6"></div>
<div class="abs" style="left:0;top:0;width:2794px;height:126px;z-index:7"><div class="abs" style="left:30px;top:22px;width:80px;height:80px;border-radius:50%;background:rgba(0,0,0,0.1)"></div><div class="abs" style="left:52px;top:52px;width:36px;height:4px;background:#e6e6ea"></div><div class="abs" style="left:52px;top:62px;width:36px;height:4px;background:#e6e6ea"></div><div class="abs" style="left:52px;top:72px;width:36px;height:4px;background:#e6e6ea"></div><svg style="left:0;top:0" width="300" height="126" viewBox="0 0 300 126">
<path d="M200.4,34.7 A44,44 0 0 0 158.6,13.9 A42,42 0 0 0 116.7,56.2 A42,42 0 0 0 128.5,78.4 L117.4,88.8 A42,42 0 0 0 158.2,109.9 A42,42 0 0 0 199.7,67.3 A42,42 0 0 0 186.4,44.3 Z" fill="#05a8c2" stroke="#f2f4fa" stroke-width="4.4" stroke-linejoin="miter" transform="translate(158.5,62) scale(0.952) translate(-158.5,-62)"/>
<path d="M139.5,82.5 L179.5,42.5" stroke="#1690ab" stroke-width="12" stroke-linecap="butt"/>
</svg><div class="t" style="left:216.0px;top:41.5px;font-size:43.5px;font-weight:700;color:#ffffff;transform:scaleX(0.8340);">SIG</div><svg style="left:0;top:0" width="2794" height="126">
<circle cx="2559" cy="63" r="20" fill="#fff"/>
<circle cx="2559" cy="55" r="5.9" fill="#283593"/>
<path d="M2547 70.5 Q2559 58.5 2571 70.5 Q2559 82.5 2547 70.5 Z" fill="#283593"/>
<path d="M2700 58.7 L2720 58.7 L2710 69 Z" fill="#fff"/>
</svg><div class="t" style="left:2590.0px;top:46.5px;font-size:30px;font-weight:700;color:#ffffff;transform:scaleX(0.8950);">ADMIN</div></div>
<div class="abs" style="left:0;top:0;width:2794px;height:254px;z-index:6"><div class="t" style="left:30.8px;top:168.8px;font-size:41.8px;font-weight:700;color:#ffffff;transform:scaleX(0.8916);">Gestão de Clientes</div><svg style="left:1862px;top:168px" width="48" height="48" viewBox="0 0 24 24"><path fill="#fff" d="M15.5 14h-.79l-.28-.27C15.41 12.59 16 11.11 16 9.5 16 5.91 13.09 3 9.5 3S3 5.91 3 9.5 5.91 16 9.5 16c1.61 0 3.09-.59 4.23-1.57l.27.28v.79l5 4.99L20.49 19l-4.99-5zm-6 0C7.01 14 5 11.99 5 9.5S7.01 5 9.5 5 14 7.01 14 9.5 11.99 14 9.5 14z"/></svg><svg style="left:1992px;top:167px" width="48" height="48" viewBox="0 0 24 24"><path fill="#fff" d="M10 18h4v-2h-4v2zM3 6v2h18V6H3zm3 7h12v-2H6v2z"/></svg><div class="t" style="left:2041.2px;top:174.6px;font-size:30px;font-weight:700;color:#ffffff;transform:scaleX(0.8467);">Filtrar</div><svg style="left:2188px;top:167px" width="48" height="48" viewBox="0 0 24 24"><path fill="#fff" d="M17.65 6.35C16.2 4.9 14.21 4 12 4c-4.42 0-7.99 3.58-7.99 8s3.57 8 7.99 8c3.73 0 6.84-2.55 7.73-6h-2.08c-.82 2.33-3.04 4-5.65 4-3.31 0-6-2.69-6-6s2.69-6 6-6c1.66 0 3.14.69 4.22 1.78L13 11h7V4l-2.35 2.35z"/></svg><div class="t" style="left:2235.9px;top:174.6px;font-size:30px;font-weight:700;color:#ffffff;transform:scaleX(0.8769);">Atualizar</div><div class="abs" style="left:2389px;top:153px;width:239px;height:74px;border-radius:9px;background:#fff;box-shadow:0 6px 2px -4px rgba(0,0,0,.2),0 4px 4px 0 rgba(0,0,0,.14),0 2px 10px 0 rgba(0,0,0,.12)"></div><svg style="left:2421px;top:167px" width="48" height="48" viewBox="0 0 24 24"><path fill="#212121" d="M19 13h-6v6h-2v-6H5v-2h6V5h2v6h6v2z"/></svg><div class="t" style="left:2476.7px;top:174.6px;font-size:30px;font-weight:700;color:#212121;transform:scaleX(0.8586);">Adicionar</div><svg style="left:2678px;top:168px" width="48" height="48" viewBox="0 0 24 24"><path fill="#fff" d="M12 8c1.1 0 2-.9 2-2s-.9-2-2-2-2 .9-2 2 .9 2 2 2zm0 2c-1.1 0-2 .9-2 2s.9 2 2 2 2-.9 2-2-.9-2-2-2zm0 6c-1.1 0-2 .9-2 2s.9 2 2 2 2-.9 2-2-.9-2-2-2z"/></svg></div>
<div class="abs" style="left:2768px;top:254px;width:26px;height:1286px;background:linear-gradient(90deg,#d9d9d9 0,#d9d9d9 5px,#e8e8e8 5px,#ebebeb 9px,#f0f0f0 12px,#f2f2f2 22px,#e7e7e7 26px);z-index:4"></div>
<div class="abs" style="left:2768px;top:254px;width:26px;height:374px;background:#283593;z-index:4"></div>
<div class="abs" style="left:2658px;top:1428px;width:100px;height:100px;border-radius:50%;background:#40ab37;box-shadow:0 3px 5px -1px rgba(0,0,0,.2),0 6px 10px 0 rgba(0,0,0,.14),0 1px 18px 0 rgba(0,0,0,.12);z-index:8"></div>
<svg style="left:2658px;top:1428px;z-index:9" width="100" height="100" viewBox="0 0 100 100">
<path d="M28.9,75.7 L29.6,62.7 A26.4,26.4 0 1 1 40.8,70.5 Z" fill="#1b4f19" opacity="0.8" transform="translate(5,6)"/>
<path d="M28.9,75.7 L29.6,62.7 A26.4,26.4 0 1 1 40.8,70.5 Z" fill="#ffffff"/>
<path d="M39.6,39.5 A21.5,21.5 0 0 0 58.5,58.2" fill="none" stroke="#40ab37" stroke-width="6"/>
<rect x="35.2" y="31.6" width="12.5" height="8.6" rx="3" fill="#40ab37" transform="rotate(-48 41.5 35.9)"/>
<rect x="54" y="52.5" width="12.5" height="8.6" rx="3" fill="#40ab37" transform="rotate(-42 60.2 56.8)"/>
</svg>
<div class="abs" style="left:0;top:1540px;width:2794px;height:126px;background:#283593;z-index:7"><div class="abs" style="left:0;top:-1540px;width:2794px;height:1666px"><div class="t" style="left:1750.0px;top:1585.3px;font-size:33.5px;font-weight:700;color:#f5f5f5;transform:scaleX(0.9410);">Items per page:</div><div class="t" style="left:2024.3px;top:1592.5px;font-size:25px;font-weight:400;color:#f5f5f5;transform:scaleX(0.9133);">50</div><svg style="left:0;top:0" width="2794" height="1666"><path d="M2083.4 1601.8 L2102.8 1601.8 L2093.1 1611.9 Z" fill="#2b2b3a"/></svg><div class="abs" style="left:1999px;top:1635px;width:112px;height:2px;background:#f5f5f5"></div><div class="t" style="left:2181.5px;top:1585.3px;font-size:33.5px;font-weight:700;color:#f5f5f5;transform:scaleX(1.0061);">1 – 50 of 103</div><svg style="left:2458px;top:1578px" width="56" height="56" viewBox="0 0 24 24"><path fill="rgba(0,0,0,0.26)" d="M18.41 16.59L13.82 12l4.59-4.59L17 6l-6 6 6 6zM6 6h2v12H6z"/></svg><svg style="left:2538px;top:1578px" width="56" height="56" viewBox="0 0 24 24"><path fill="rgba(0,0,0,0.26)" d="M15.41 7.41L14 6l-6 6 6 6 1.41-1.41L10.83 12z"/></svg><svg style="left:2618px;top:1578px" width="56" height="56" viewBox="0 0 24 24"><path fill="#f3f3f5" d="M10 6L8.59 7.41 13.17 12l-4.58 4.59L10 18l6-6z"/></svg><svg style="left:2698px;top:1578px" width="56" height="56" viewBox="0 0 24 24"><path fill="#f3f3f5" d="M5.59 7.41L10.18 12l-4.59 4.59L7 18l6-6-6-6zM16 6h2v12h-2z"/></svg></div></div></body></html>
